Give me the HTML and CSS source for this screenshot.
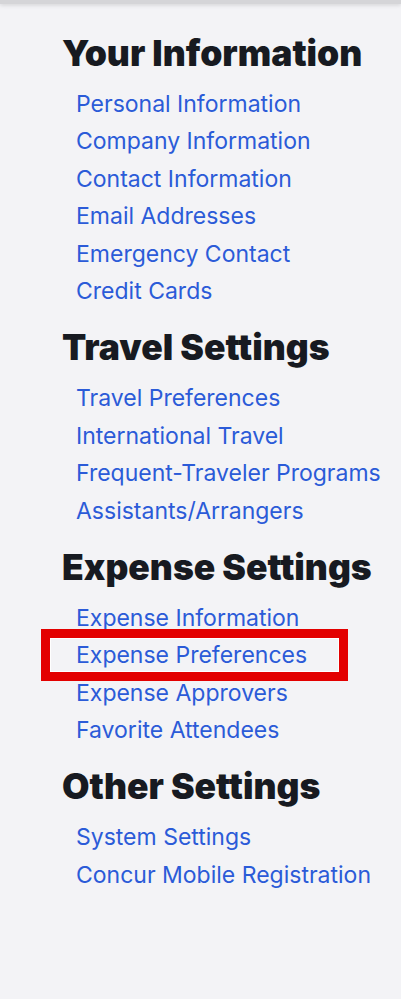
FILE: index.html
```html
<!doctype html>
<html lang="en">
<head>
	<meta charset="utf-8">
	<title>Profile</title>
	<link rel="stylesheet" href="styles.css">
</head>
<body>
	<div class="topBar"></div>
	<div class="menu">
		<div class="group">
			<h2>Your Information</h2>
			<ul>
				<li><a href="#">Personal Information</a></li>
				<li><a href="#">Company Information</a></li>
				<li><a href="#">Contact Information</a></li>
				<li><a href="#">Email Addresses</a></li>
				<li><a href="#">Emergency Contact</a></li>
				<li><a href="#">Credit Cards</a></li>
			</ul>
		</div>
		<div class="group">
			<h2>Travel Settings</h2>
			<ul>
				<li><a href="#">Travel Preferences</a></li>
				<li><a href="#">International Travel</a></li>
				<li><a href="#">Frequent-Traveler Programs</a></li>
				<li><a href="#">Assistants/Arrangers</a></li>
			</ul>
		</div>
		<div class="group">
			<h2>Expense Settings</h2>
			<ul>
				<li><a href="#">Expense Information</a></li>
				<li class="mark"><a href="#">Expense Preferences</a></li>
				<li><a href="#">Expense Approvers</a></li>
				<li><a href="#">Favorite Attendees</a></li>
			</ul>
		</div>
		<div class="group">
			<h2>Other Settings</h2>
			<ul>
				<li><a href="#">System Settings</a></li>
				<li><a href="#">Concur Mobile Registration</a></li>
			</ul>
		</div>
	</div>
</body>
</html>
```
FILE: styles.css
```css
*{ padding: 0; margin: 0 }
body{ background: #f3f3f6; font-family: Inter, "Noto Sans", sans-serif; height: 999px; overflow: hidden }
.topBar{ height: 4px; background: #d5d5d8; box-shadow: 0 1px 4px rgba(0,0,0,0.15) }
.menu{ padding: 30px 0 0 62px }
.group{ margin-bottom: 18px }
.group h2{ font-size: 35.5px; line-height: 40px; font-weight: 900; color: #171a21; letter-spacing: 0 }
.group ul{ list-style: none; margin: 12px 0 0 14px }
.group li{ height: 37.4px; line-height: 37.4px; font-size: 23px }
.group a{ color: #2b5bd8; text-decoration: none }
.mark{ position: relative }
.mark::after{ content: ""; position: absolute; left: -35px; top: -8px; width: 289px; height: 34px; border: 9px solid #e30000; box-shadow: inset 0 0 0 1px #fff }
```
